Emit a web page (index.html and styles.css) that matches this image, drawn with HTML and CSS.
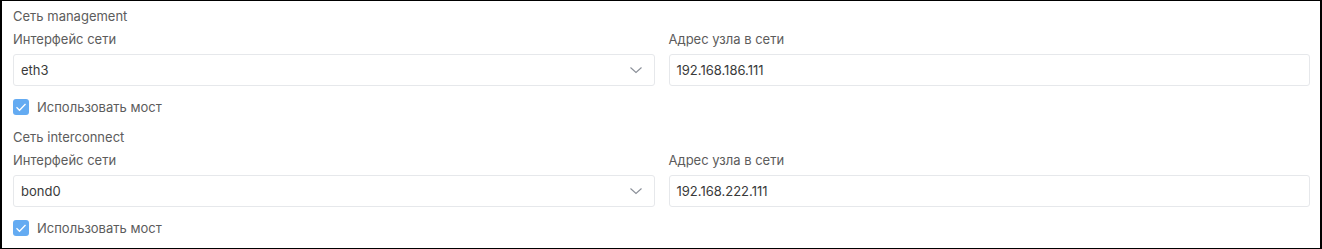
FILE: index.html
```html
<!DOCTYPE html>
<html lang="ru">
<head>
    <meta charset="UTF-8">
    <meta name="viewport" content="width=device-width, initial-scale=1.0">
    <title>Сетевые настройки</title>
    <link rel="stylesheet" href="styles.css">
</head>
<body>
    <div class="frame">
        <div class="section">
            <div class="section-title">Сеть management</div>
            <div class="row">
                <div class="field">
                    <label class="label">Интерфейс сети</label>
                    <div class="select">
                        <span>eth3</span>
                        <svg class="chevron" width="14" height="8" viewBox="0 0 14 8"><path d="M1.5 1.5l5.5 5 5.5-5" fill="none" stroke="#8a8f98" stroke-width="1.1"/></svg>
                    </div>
                </div>
                <div class="field">
                    <label class="label">Адрес узла в сети</label>
                    <div class="input">192.168.186.111</div>
                </div>
            </div>
            <div class="check">
                <span class="box"><svg width="16" height="16" viewBox="0 0 16 16"><path d="M3.5 8.2l3 3 6-6.2" fill="none" stroke="#fff" stroke-width="1.3"/></svg></span>
                <span>Использовать мост</span>
            </div>
        </div>

        <div class="section">
            <div class="section-title">Сеть interconnect</div>
            <div class="row">
                <div class="field">
                    <label class="label">Интерфейс сети</label>
                    <div class="select">
                        <span>bond0</span>
                        <svg class="chevron" width="14" height="8" viewBox="0 0 14 8"><path d="M1.5 1.5l5.5 5 5.5-5" fill="none" stroke="#8a8f98" stroke-width="1.1"/></svg>
                    </div>
                </div>
                <div class="field">
                    <label class="label">Адрес узла в сети</label>
                    <div class="input">192.168.222.111</div>
                </div>
            </div>
            <div class="check">
                <span class="box"><svg width="16" height="16" viewBox="0 0 16 16"><path d="M3.5 8.2l3 3 6-6.2" fill="none" stroke="#fff" stroke-width="1.3"/></svg></span>
                <span>Использовать мост</span>
            </div>
        </div>
    </div>
</body>
</html>
```

FILE: styles.css
```css
body {
    margin: 0;
    font-family: Inter, "Noto Sans", sans-serif;
    font-size: 13px;
    color: #5c5c5c;
    background: #fff;
}
.frame {
    height: 249px;
    box-sizing: border-box;
    border-style: solid;
    border-color: #000;
    border-width: 1px 2px 1px 2px;
    padding: 5px 10px 0 11px;
}
.section + .section { margin-top: 10px; }
.section-title { line-height: 20px; }
.row {
    display: grid;
    grid-template-columns: 1fr 1fr;
    column-gap: 14px;
    margin-top: 3px;
}
.label {
    display: block;
    line-height: 20px;
    margin-bottom: 5px;
}
.select, .input {
    height: 32px;
    box-sizing: border-box;
    border: 1px solid #e6e8eb;
    border-radius: 3px;
    padding: 0 11px 0 7px;
    display: flex;
    align-items: center;
    color: #3a3a3a;
}
.select { justify-content: space-between; }
.check {
    display: flex;
    align-items: center;
    gap: 8px;
    margin-top: 11px;
    line-height: 20px;
}
.box {
    width: 16px;
    height: 16px;
    border-radius: 3px;
    background: #64abf2;
    display: flex;
}
```
